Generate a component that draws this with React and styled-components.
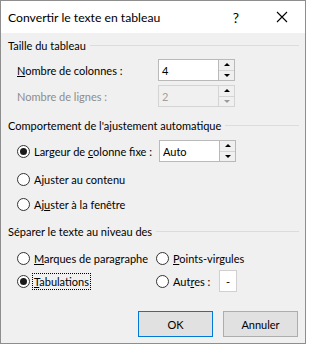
import React from 'react';
import styled, { createGlobalStyle } from 'styled-components';

const GlobalStyle = createGlobalStyle`
  body {
    margin: 0;
    background: #ffffff;
    font-family: Lato, "Noto Sans", "Liberation Sans", sans-serif;
  }
`

// window frame
const Window = styled.div`
  width: 306px;
  height: 344px;
  box-sizing: border-box;
  border: 1px solid #8e8e8e;
  background: #f0f0f0;
  display: flex;
  flex-direction: column;
  white-space: nowrap;
`

const TitleBar = styled.div`
  height: 32px;
  background: #ffffff;
  display: flex;
  align-items: center;
  padding-left: 7px;
  font-size: 12.2px;
  color: #000;
`

const Title = styled.div`
  flex: 1;
`

const TitleButton = styled.div`
  width: 46px;
  height: 32px;
  display: flex;
  align-items: center;
  justify-content: center;
  font-size: 14px;
`

const Body = styled.div`
  flex: 1;
  padding: 2px 6px 0 7px;
  display: flex;
  flex-direction: column;
  font-size: 11px;
  color: #000;
`

const GroupHeader = styled.div`
  height: 20px;
  display: flex;
  align-items: center;
  gap: 4px;
  margin-top: ${p => p.top || 0}px;
  &::after {
    content: '';
    flex: 1;
    height: 1px;
    background: #dcdcdc;
  }
`

const Row = styled.div`
  height: ${p => p.h || 22}px;
  margin-top: ${p => p.top || 0}px;
  padding-left: ${p => p.indent || 9}px;
  display: flex;
  align-items: center;
  color: ${p => p.disabled ? '#8d8d8d' : '#000'};
`

const Label = styled.div`
  width: ${p => p.w}px;
`

const Field = styled.div`
  display: flex;
  height: 22px;
`

const Input = styled.div`
  width: ${p => p.w || 60}px;
  box-sizing: border-box;
  border: 1px solid ${p => p.disabled ? '#d4d4d4' : '#b9b9b9'};
  border-right: none;
  background: ${p => p.disabled ? '#f0f0f0' : '#ffffff'};
  color: ${p => p.disabled ? '#a0a0a0' : '#000'};
  padding-left: 3px;
  display: flex;
  align-items: center;
`

const SmallInput = styled.div`
  width: 18px;
  height: 22px;
  box-sizing: border-box;
  border: 1px solid #d0d0d0;
  background: #fff;
  display: flex;
  align-items: center;
  justify-content: center;
`

const Spinner = styled.div`
  width: 17px;
  box-sizing: border-box;
  border: 1px solid ${p => p.disabled ? '#d4d4d4' : '#b9b9b9'};
  display: flex;
  flex-direction: column;
  background: #f0f0f0;
`

const SpinHalf = styled.div`
  flex: 1;
  display: flex;
  align-items: center;
  justify-content: center;
  border-top: ${p => p.second ? '1px solid #d4d4d4' : 'none'};
  &::before {
    content: '';
    border-left: 3px solid transparent;
    border-right: 3px solid transparent;
    ${p => p.down ? 'border-top' : 'border-bottom'}: 3px solid ${p => p.faded ? '#9a9a9a' : '#000'};
  }
`

const Radio = styled.div`
  width: 13px;
  height: 13px;
  box-sizing: border-box;
  border: 1px solid #333;
  border-radius: 50%;
  background: #fff;
  margin-right: 4px;
  flex-shrink: 0;
  display: flex;
  align-items: center;
  justify-content: center;
  &::after {
    content: '';
    display: ${p => p.checked ? 'block' : 'none'};
    width: 7px;
    height: 7px;
    border-radius: 50%;
    background: #1a1a1a;
  }
`

const Option = styled.div`
  display: flex;
  align-items: center;
  width: ${p => p.w ? p.w + 'px' : 'auto'};
`

const OptionText = styled.span`
  padding: 1px 1px;
  border: 1px ${p => p.focus ? 'dotted #000' : 'solid transparent'};
  margin-left: -2px;
`

const Key = styled.span`
  text-decoration: underline;
`

const Buttons = styled.div`
  margin-top: 19px;
  display: flex;
  justify-content: flex-end;
  gap: 10px;
  padding-right: 1px;
`

const Button = styled.div`
  width: 75px;
  height: 26px;
  box-sizing: border-box;
  border: 1px solid ${p => p.primary ? '#0078d7' : '#adadad'};
  background: #e1e1e1;
  display: flex;
  align-items: center;
  justify-content: center;
`

const SpinField = ({ value, w, disabled }) => (
  <Field>
    <Input w={w} disabled={disabled}>{value}</Input>
    <Spinner disabled={disabled}>
      <SpinHalf />
      <SpinHalf down second faded={disabled} />
    </Spinner>
  </Field>
)

export default function App() {
  return (
    <>
      <GlobalStyle />
      <Window>
        <TitleBar>
          <Title>Convertir le texte en tableau</Title>
          <TitleButton>?</TitleButton>
          <TitleButton>
            <svg width="12" height="12" viewBox="0 0 12 12">
              <path d="M1 1 L11 11 M11 1 L1 11" stroke="#000" strokeWidth="1.1" />
            </svg>
          </TitleButton>
        </TitleBar>
        <Body>
          <GroupHeader>Taille du tableau</GroupHeader>
          <Row top={4}>
            <Label w={141}><Key>N</Key>ombre de colonnes :</Label>
            <SpinField value="4" />
          </Row>
          <Row top={4} disabled>
            <Label w={141}>Nombre de lignes :</Label>
            <SpinField value="2" disabled />
          </Row>
          <GroupHeader top={8}>Comportement de l'ajustement automatique</GroupHeader>
          <Row top={4} h={24}>
            <Option w={142}>
              <Radio checked />
              <OptionText>Largeur de <Key>c</Key>olonne fixe :</OptionText>
            </Option>
            <SpinField value="Auto" />
          </Row>
          <Row top={5}>
            <Option>
              <Radio />
              <OptionText>A<Key>j</Key>uster au contenu</OptionText>
            </Option>
          </Row>
          <Row top={3}>
            <Option>
              <Radio />
              <OptionText>Aj<Key>u</Key>ster à la fenêtre</OptionText>
            </Option>
          </Row>
          <GroupHeader top={6}>Séparer le texte au niveau des</GroupHeader>
          <Row top={6}>
            <Option w={139}>
              <Radio />
              <OptionText><Key>M</Key>arques de paragraphe</OptionText>
            </Option>
            <Option>
              <Radio />
              <OptionText><Key>P</Key>oints-virgules</OptionText>
            </Option>
          </Row>
          <Row top={1}>
            <Option w={139}>
              <Radio checked />
              <OptionText focus><Key>T</Key>abulations</OptionText>
            </Option>
            <Option w={63}>
              <Radio />
              <OptionText>Aut<Key>r</Key>es :</OptionText>
            </Option>
            <SmallInput>-</SmallInput>
          </Row>
          <Buttons>
            <Button primary>OK</Button>
            <Button>Annuler</Button>
          </Buttons>
        </Body>
      </Window>
    </>
  );
}
